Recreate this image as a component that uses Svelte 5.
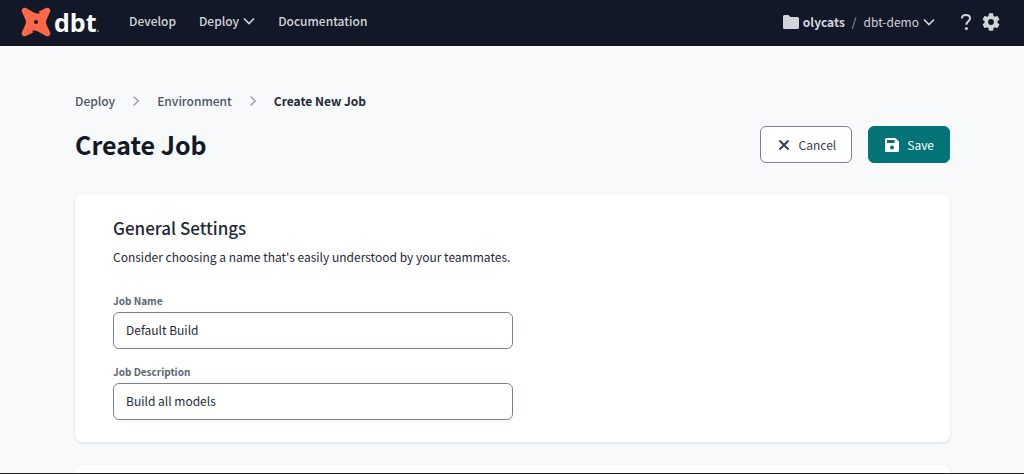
<script>
  let jobName = $state('Default Build');
  let jobDescription = $state('Build all models');
</script>

<div class="page">
  <header class="topbar">
    <a class="logo" href="#home" aria-label="dbt home">
      <svg width="30" height="30" viewBox="0 0 30 30" aria-hidden="true">
        <path
          fill="#ff694a"
          d="M5 1 12.500 5.200C14.500 6.200 16.800 6.800 19 6.300L17.500 4.800 25 1C27.600-.1 30 2.200 29 5L25.800 12C24.800 14.400 24.800 16 25.800 18.400L29 25C30.100 27.900 27.800 30.100 25 29L17.500 24.800C15.500 23.800 13.200 23.200 11 23.700L12.500 25.200 5 29C2.200 30.100-.1 27.800 1 25L4.200 18C5.200 16 5.200 14 4.200 12L1 5C-.1 2.200 2.200-.1 5 1Z"
        />
        <circle cx="15" cy="15" r="2" fill="#121827" />
      </svg>
      <span class="wordmark">dbt</span>
      <svg class="mark" width="2" height="2" viewBox="0 0 2 2" aria-hidden="true"><circle cx="1" cy="1" r=".7" fill="#fff" /></svg>
    </a>
    <nav class="links">
      <a href="#develop">Develop</a>
      <a href="#deploy">
        Deploy
        <svg class="chevron" width="12" height="12" viewBox="0 0 12 12" aria-hidden="true"><path d="M1 3.500 6 8.500 11 3.500" /></svg>
      </a>
      <a href="#docs">Documentation</a>
    </nav>
    <div class="account">
      <a class="org" href="#org">
        <svg width="16" height="14" viewBox="0 0 16 14" aria-hidden="true">
          <path fill="currentColor" d="M1.500 0H5.500L7.500 2H14.500Q16 2 16 3.500V12.500Q16 14 14.500 14H1.500Q0 14 0 12.500V1.500Q0 0 1.500 0Z" />
        </svg>
        olycats
      </a>
      <span class="slash">/</span>
      <a class="project" href="#project">
        dbt-demo
        <svg class="chevron" width="12" height="12" viewBox="0 0 12 12" aria-hidden="true"><path d="M1 3.500 6 8.500 11 3.500" /></svg>
      </a>
    </div>
    <div class="tools">
      <button class="icon" aria-label="Help">
        <svg width="12" height="18" viewBox="0 0 12 18" aria-hidden="true">
          <path d="M1.800 5.500C2 3.300 3.700 2.100 5.800 2.100 8.200 2.100 10 3.500 10 5.500 10 8.300 6.400 8.300 6.400 11.800" fill="none" stroke="currentColor" stroke-width="2" />
          <circle cx="6.400" cy="15.500" r="1.500" fill="currentColor" />
        </svg>
      </button>
      <button class="icon" aria-label="Settings">
        <svg width="18" height="18" viewBox="2 2 20 20" aria-hidden="true">
          <path
            fill="currentColor"
            d="M19.140 12.940c.04-.3.06-.61.06-.94s-.02-.64-.07-.94l2.030-1.580c.18-.14.23-.41.12-.61l-1.920-3.320c-.12-.22-.37-.29-.59-.22l-2.390.96c-.5-.38-1.030-.7-1.620-.94l-.36-2.540c-.04-.24-.24-.41-.48-.41h-3.840c-.24 0-.43.17-.47.41l-.36 2.540c-.59.24-1.130.57-1.620.94l-2.390-.96c-.22-.08-.47 0-.59.22L2.740 8.870c-.12.21-.08.47.12.61l2.030 1.580c-.05.3-.09.63-.09.94s.02.64.07.94l-2.030 1.580c-.18.14-.23.41-.12.61l1.920 3.320c.12.22.37.29.59.22l2.390-.96c.5.38 1.030.7 1.620.94l.36 2.540c.05.24.24.41.48.41h3.840c.24 0 .44-.17.47-.41l.36-2.540c.59-.24 1.130-.56 1.620-.94l2.390.96c.22.08.47 0 .59-.22l1.920-3.320c.12-.22.07-.47-.12-.61l-2.010-1.580zM12 15.200A3.200 3.200 0 1 1 12 8.800a3.200 3.200 0 0 1 0 6.400z"
          />
        </svg>
      </button>
    </div>
  </header>

  <main>
    <nav class="crumbs" aria-label="Breadcrumb">
      <a href="#deploy">Deploy</a>
      <svg width="8" height="12" viewBox="0 0 8 12" aria-hidden="true"><path d="M1.500 1.500 6.200 6 1.500 10.500" /></svg>
      <a href="#environment">Environment</a>
      <svg width="8" height="12" viewBox="0 0 8 12" aria-hidden="true"><path d="M1.500 1.500 6.200 6 1.500 10.500" /></svg>
      <span class="current" aria-current="page">Create New Job</span>
    </nav>

    <div class="heading">
      <h1>Create Job</h1>
      <button class="btn">
        <svg width="14" height="14" viewBox="0 0 14 14" aria-hidden="true"><path d="M2.500 2.500 11.500 11.500M11.500 2.500 2.500 11.500" stroke="currentColor" stroke-width="2" /></svg>
        Cancel
      </button>
      <button class="btn primary">
        <svg width="14" height="14" viewBox="0 0 14 14" aria-hidden="true">
          <path
            fill="currentColor"
            fill-rule="evenodd"
            d="M1.500 0H10.500L14 3.500V12.500Q14 14 12.500 14H1.500Q0 14 0 12.500V1.500Q0 0 1.500 0ZM2 2V5H9.500V2ZM7 7.500A2 2 0 1 0 7 11.500A2 2 0 1 0 7 7.500Z"
          />
        </svg>
        Save
      </button>
    </div>

    <section class="card">
      <h2>General Settings</h2>
      <p>Consider choosing a name that's easily understood by your teammates.</p>
      <div class="field">
        <label for="job-name">Job Name</label>
        <input id="job-name" type="text" bind:value={jobName} />
      </div>
      <div class="field">
        <label for="job-description">Job Description</label>
        <input id="job-description" type="text" bind:value={jobDescription} />
      </div>
    </section>
    <section class="card next"></section>
  </main>
  <footer></footer>
</div>

<style>
  :global(body) {
    margin: 0;
    background: #f8f9fb;
  }
  .page {
    display: flex;
    flex-direction: column;
    min-height: 100vh;
    font-family: 'Noto Sans CJK SC', 'Noto Sans', sans-serif;
    font-size: 12px;
    line-height: 20px;
    color: #1f2937;
  }
  a {
    color: inherit;
    text-decoration: none;
  }
  svg {
    flex: none;
  }
  .topbar {
    display: flex;
    align-items: center;
    height: 46px;
    padding: 0 24px 2px 21px;
    box-sizing: border-box;
    background: #121827;
    color: #d1d5db;
  }
  .logo {
    display: flex;
    align-items: center;
    width: 108px;
    color: #fff;
  }
  .wordmark {
    margin-left: 3px;
    font-family: 'Open Sans', sans-serif;
    font-size: 25px;
    line-height: 28px;
    font-weight: 700;
  }
  .mark {
    align-self: flex-end;
    margin-bottom: 5px;
  }
  .links {
    display: flex;
    gap: 23px;
    margin-right: auto;
    padding-bottom: 2px;
    font-weight: 500;
  }
  .links a,
  .org,
  .project {
    display: flex;
    align-items: center;
    gap: 4px;
  }
  .chevron {
    fill: none;
    stroke: currentColor;
    stroke-width: 1.600;
  }
  .account {
    display: flex;
    gap: 7px;
  }
  .org {
    font-weight: 700;
  }
  .slash {
    color: #9ca3af;
  }
  .tools {
    display: flex;
    gap: 10px;
    margin-left: 25px;
  }
  .icon {
    display: flex;
    padding: 0;
    border: 0;
    background: none;
    color: #d1d5db;
  }
  main {
    display: flex;
    flex: 1;
    flex-direction: column;
    padding: 45px 74px 0 75px;
  }
  .crumbs {
    display: flex;
    align-items: center;
    gap: 17px;
    font-weight: 500;
    color: #4b5563;
  }
  .crumbs svg {
    fill: none;
    stroke: #9ca3af;
    stroke-width: 1.500;
  }
  .current {
    font-weight: 700;
    color: #1f2937;
  }
  .heading {
    display: flex;
    align-items: center;
    gap: 16px;
    margin: 15px 0 31px;
  }
  h1 {
    flex: 1;
    margin: 0;
    padding-bottom: 2px;
    font-size: 25px;
    line-height: 34px;
    font-weight: 700;
    color: #121827;
  }
  .btn {
    display: flex;
    align-items: center;
    gap: 8px;
    height: 37px;
    padding: 0 15px 0 16px;
    border: 1px solid #7b8194;
    border-radius: 6px;
    background: #fff;
    font: inherit;
    color: #374151;
  }
  .primary {
    border-color: #047377;
    background: #047377;
    color: #fff;
  }
  .card {
    padding: 20px 38px 22px;
    border-radius: 7px;
    background: #fff;
    box-shadow: 0 1px 3px rgba(0, 0, 0, 0.12);
  }
  .next {
    flex: 1;
    margin-top: 23px;
    padding: 8px 0 0;
    border-radius: 7px 7px 0 0;
  }
  h2 {
    margin: 0 0 5px;
    font-size: 17px;
    line-height: 28px;
    font-weight: 500;
  }
  p {
    margin: 0 0 26px;
  }
  .field {
    display: flex;
    flex-direction: column;
    gap: 3px;
    max-width: 400px;
  }
  .field + .field {
    margin-top: 15px;
  }
  label {
    font-size: 10px;
    line-height: 16px;
    font-weight: 700;
    color: #5b6472;
  }
  input {
    height: 37px;
    padding: 0 12px 2px;
    box-sizing: border-box;
    border: 1px solid #7b8194;
    border-radius: 6px;
    background: #fff;
    font: inherit;
    color: #1f2937;
  }
  footer {
    height: 1px;
    background: #1c1d1f;
  }
</style>
